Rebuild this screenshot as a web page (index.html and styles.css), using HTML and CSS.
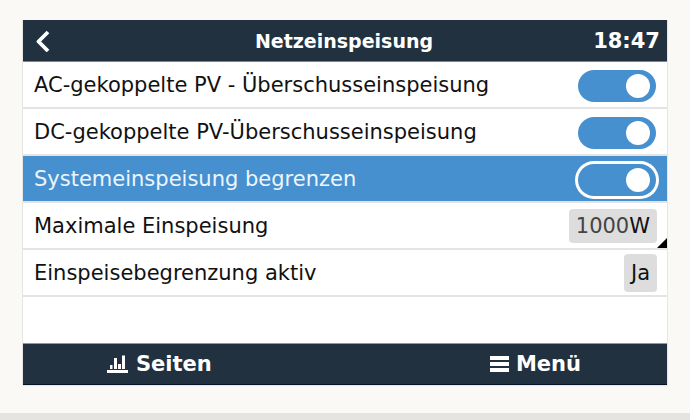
FILE: index.html
```html
<!DOCTYPE html>
<html lang="de">
<head>
<meta charset="utf-8">
<title>Netzeinspeisung</title>
<link rel="stylesheet" href="styles.css">
</head>
<body>
<main class="panel">
  <header class="bar header">
    <button class="back" type="button" aria-label="Zurück">
      <svg width="16" height="22" viewBox="0 0 16 22" aria-hidden="true"><path d="M13 2 L3.500 11.500 L13 21" fill="none" stroke="#fff" stroke-width="3.800" stroke-linecap="butt" stroke-linejoin="round"/></svg>
    </button>
    <h1 class="title">Netzeinspeisung</h1>
    <time class="clock">18:47</time>
  </header>
  <section class="list">
    <div class="row">
      <label for="ac">AC-gekoppelte PV - Überschusseinspeisung</label>
      <input class="switch" id="ac" type="checkbox" role="switch" checked>
    </div>
    <div class="row">
      <label for="dc">DC-gekoppelte PV-Überschusseinspeisung</label>
      <input class="switch" id="dc" type="checkbox" role="switch" checked>
    </div>
    <div class="row selected">
      <label for="limit">Systemeinspeisung begrenzen</label>
      <input class="switch" id="limit" type="checkbox" role="switch" checked>
    </div>
    <div class="row editable">
      <label for="max">Maximale Einspeisung</label>
      <button class="value" id="max" type="button"><span class="number">1000</span>W</button>
    </div>
    <div class="row">
      <span id="active-label">Einspeisebegrenzung aktiv</span>
      <output class="value tall" aria-labelledby="active-label">Ja</output>
    </div>
  </section>
  <nav class="bar footer">
    <button class="tab" type="button">
      <svg width="22" height="20" viewBox="0 0 22 20" aria-hidden="true"><path d="M0 16h21v3H0zM3 11h2.500v4H3zM7 4h3v11H7zM11 10h3v5H11zM15 1.500h3V15H15z" fill="#fff"/></svg>
      Seiten
    </button>
    <button class="tab" type="button">
      <svg width="20" height="20" viewBox="0 0 20 20" aria-hidden="true"><path d="M1 2h19v4H1zM1 8h19v4H1zM1 14h19v4H1z" fill="#fff"/></svg>
      Menü
    </button>
  </nav>
</main>
</body>
</html>
```
FILE: styles.css
```css
* {
  box-sizing: border-box;
}

body {
  margin: 0;
  min-height: 100vh;
  padding: 20px 22px 27px;
  border-bottom: 7px solid #e5e4e0;
  background: #faf9f5;
  color: #111;
  font-family: "DejaVu Sans", Verdana, sans-serif;
  font-size: 21px;
  line-height: 26px;
}

button {
  border: 0;
  padding: 0;
  background: none;
  color: inherit;
  font: inherit;
}

.panel {
  border: solid #e6e6e3;
  border-width: 0 1px 1px;
  background: #fff;
}

.bar {
  align-items: center;
  background: #223140;
  color: #fff;
  font-weight: bold;
}

.header {
  display: grid;
  grid-template-columns: 1fr auto 1fr;
  height: 42px;
  padding: 0 7px 0 12px;
  border-bottom: 1px solid #7b858e;
}

.back {
  display: flex;
  justify-self: start;
}

.title {
  margin: 0 7px 0 0;
  font-size: 19px;
}

.clock {
  justify-self: end;
}

.list {
  padding-bottom: 46px;
}

.row {
  position: relative;
  display: flex;
  align-items: center;
  justify-content: space-between;
  height: 47px;
  padding: 0 10px 0 11px;
  border-bottom: 2px solid #e4e4e4;
}

.selected {
  background: #4690d0;
  background-clip: padding-box;
  color: #edf5fc;
}

.switch {
  display: flex;
  align-items: center;
  justify-content: flex-end;
  width: 78px;
  height: 32px;
  margin: 2px 1px 0 0;
  padding-right: 6px;
  border-radius: 16px;
  background: #4690d0;
  appearance: none;
}

.switch::before {
  width: 24px;
  height: 24px;
  border-radius: 50%;
  background: #fff;
  content: "";
}

.switch:not(:checked) {
  justify-content: flex-start;
  padding-left: 6px;
  background: #bbb;
}

.selected .switch {
  box-shadow: 0 0 0 3px #fff;
}

.value {
  height: 34px;
  padding: 0 7px;
  border-radius: 4px;
  background: #ddd;
  line-height: 34px;
}

.tall {
  height: 38px;
  line-height: 38px;
}

.number {
  color: #444;
}

.editable::after {
  position: absolute;
  right: 0;
  bottom: 0;
  border: solid transparent;
  border-width: 10px 0 0 10px;
  border-bottom: 10px solid #000;
  border-top: 0;
  content: "";
}

.footer {
  display: flex;
  justify-content: space-between;
  height: 42px;
  padding: 0 86px 0 84px;
  border-top: 1px solid #8f969c;
  border-bottom: 1px solid #061526;
}

.tab {
  display: flex;
  align-items: center;
  gap: 7px;
}
```
